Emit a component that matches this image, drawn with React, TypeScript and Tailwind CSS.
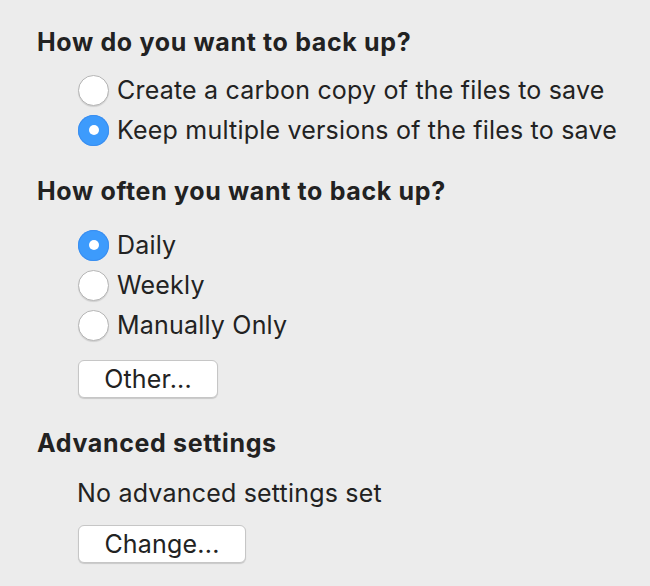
import { ReactNode } from 'react'

const font = { fontFamily: 'Inter, "Liberation Sans", sans-serif' }

function Radio({ checked, children }: { checked?: boolean; children: ReactNode }) {
  return (
    <div className="flex h-[40px] items-center gap-[8px]">
      {checked ? (
        <span className="flex h-[31px] w-[31px] shrink-0 items-center justify-center rounded-full bg-[#3d9bfc] shadow-[inset_0_0_0_1px_#3a8ef0]">
          <span className="h-[10px] w-[10px] rounded-full bg-white" />
        </span>
      ) : (
        <span className="h-[31px] w-[31px] shrink-0 rounded-full border border-[#b5b5b5] bg-white shadow-[0_1px_1px_rgba(0,0,0,0.12)]" />
      )}
      <span className="text-[25px] leading-[32px] tracking-[0.2px] text-[#222]">{children}</span>
    </div>
  )
}

function Button({ width, children }: { width: string; children: ReactNode }) {
  return (
    <button
      className={`${width} flex h-[38px] items-center justify-center rounded-[6px] border border-[#c6c6c6] bg-white text-[25px] leading-none tracking-[0.2px] text-[#222] shadow-[0_1px_1px_rgba(0,0,0,0.15)]`}
    >
      {children}
    </button>
  )
}

export default function App() {
  return (
    <div className="min-h-screen bg-[#ececec] pl-[37px] pt-[26px]" style={font}>
      <h2 className="h-[32px] text-[25px] leading-[32px] font-bold tracking-[0.65px] text-[#222]">How do you want to back up?</h2>
      <div className="mt-[12px] ml-[41px]">
        <Radio>Create a carbon copy of the files to save</Radio>
        <Radio checked>Keep multiple versions of the files to save</Radio>
      </div>

      <h2 className="mt-[25px] h-[32px] text-[25px] leading-[32px] font-bold tracking-[0.65px] text-[#222]">How often you want to back up?</h2>
      <div className="mt-[18px] ml-[41px]">
        <Radio checked>Daily</Radio>
        <Radio>Weekly</Radio>
        <Radio>Manually Only</Radio>
        <div className="mt-[15px]">
          <Button width="w-[140px]">Other...</Button>
        </div>
      </div>

      <h2 className="mt-[29px] h-[32px] text-[25px] leading-[32px] font-bold tracking-[0.65px] text-[#222]">Advanced settings</h2>
      <div className="mt-[18px] ml-[40px]">
        <p className="h-[32px] text-[25px] leading-[32px] tracking-[0.2px] text-[#222]">No advanced settings set</p>
        <div className="mt-[16px] ml-[1px]">
          <Button width="w-[168px]">Change...</Button>
        </div>
      </div>
    </div>
  )
}
